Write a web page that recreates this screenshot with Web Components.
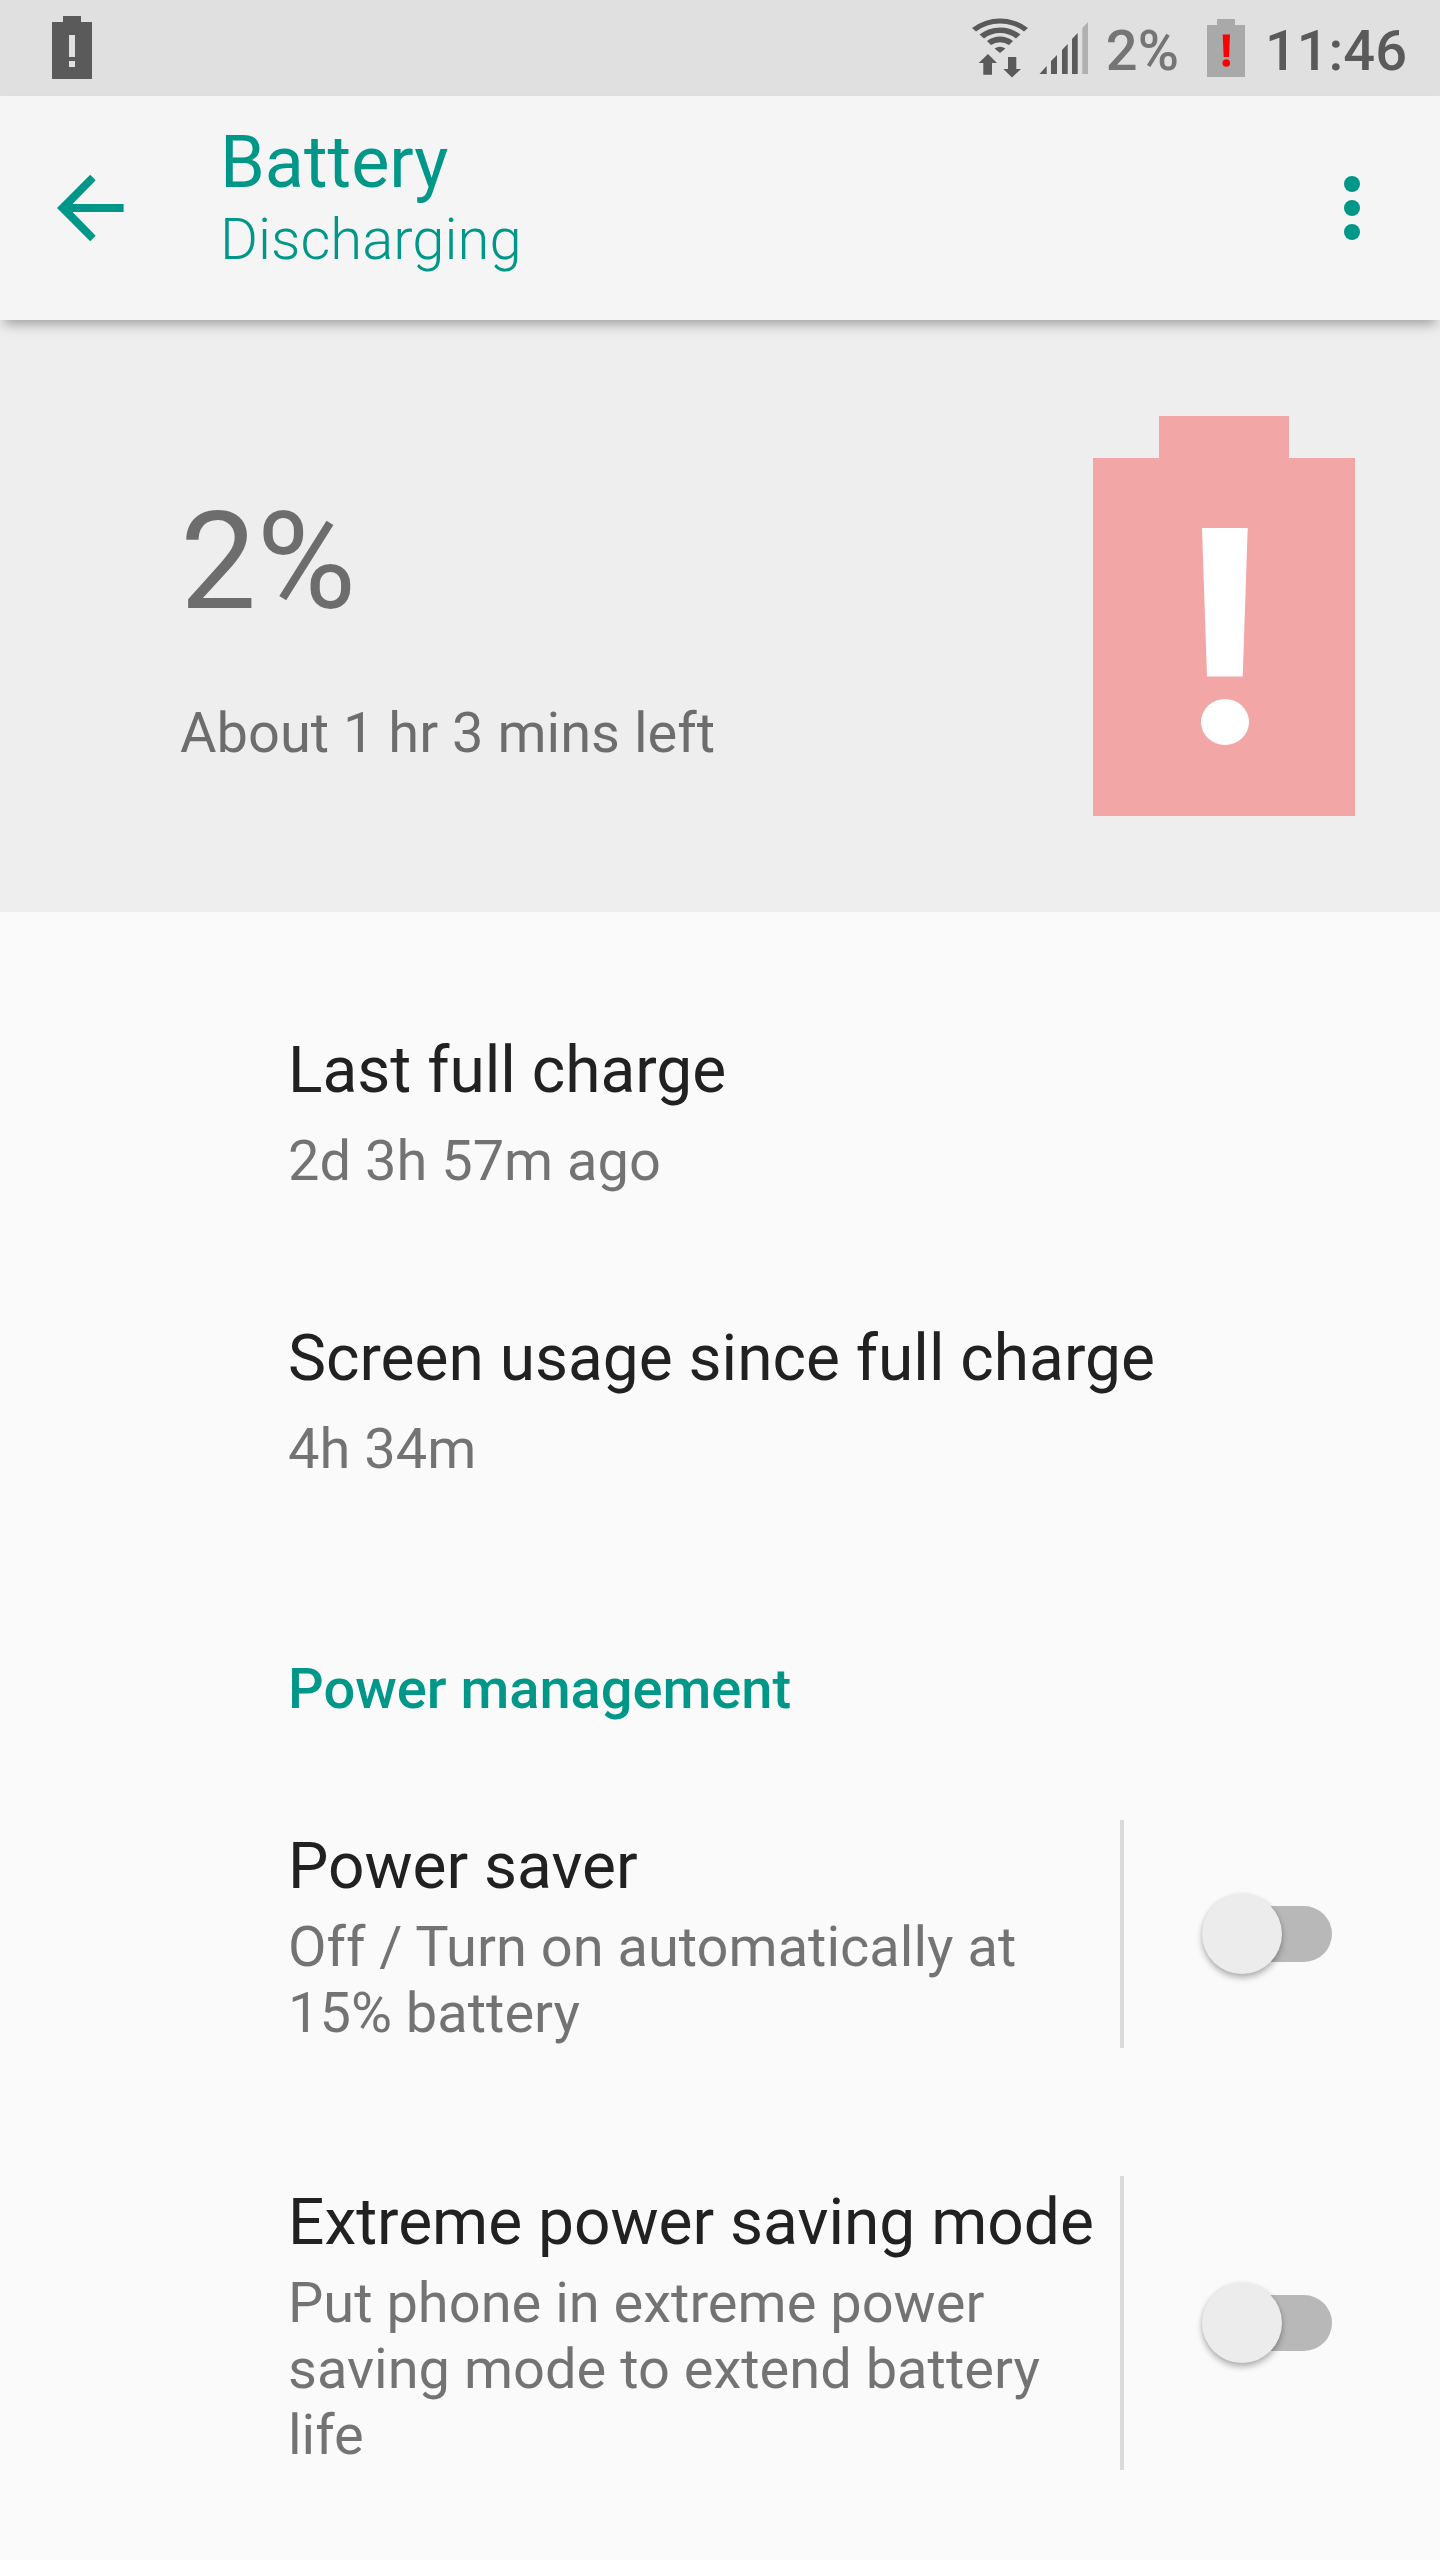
<!DOCTYPE html>
<html lang="en">
<head>
<meta charset="utf-8">
<meta name="viewport" content="width=device-width, initial-scale=1">
<title>Battery</title>
<style>
  html { background: #fafafa; }
  body {
    margin: 0;
    font-family: Roboto, "Liberation Sans", sans-serif;
    font-size: 56px;
    line-height: 66px;
    --accent: #009688;
    --primary: #212121;
    --secondary: rgba(0, 0, 0, .54);
    --status: #5a5a5a;
  }
</style>
</head>
<body>
<battery-screen></battery-screen>

<script>
const define = (name, html) => {
  const template = document.createElement('template');
  template.innerHTML = html;
  customElements.define(name, class extends HTMLElement {
    constructor() {
      super();
      this.attachShadow({ mode: 'open' }).append(template.content.cloneNode(true));
    }
  });
};

define('status-bar', `
  <style>
    :host { display: flex; align-items: center; justify-content: space-between; height: 96px;
            padding: 0 33px 0 52px; background: #e0e0e0; color: var(--status); font-weight: 500; }
    svg { display: block; height: 96px; }
    .tray { display: flex; align-items: center; }
    .level { margin: 6px 28px 0 16px; color: #757575; }
    .clock { margin: 6px 0 0 20px; }
  </style>
  <svg width="40" viewBox="52 0 40 96" role="img" aria-label="Battery low">
    <path fill="#5a5a5a" fill-rule="evenodd" d="M63 16h18v6h11v57H52V22h11zM69 35v22h6V35zM69 61v6h6v-6z"/>
  </svg>
  <div class="tray">
    <svg width="118" viewBox="972 0 118 96" fill="#5a5a5a" role="img" aria-label="Wi-Fi and mobile signal">
      <path d="M972 28A46 46 0 0 1 1028 28L1024 31.500A40 40 0 0 0 976 31.500Z"/>
      <path d="M979.500 34.500A33.500 33.500 0 0 1 1020.500 34.500L1016 38.500A26 26 0 0 0 984 38.500Z"/>
      <path d="M987 41A21 21 0 0 1 1013 41L1009 45A16 16 0 0 0 991 45Z"/>
      <path d="M994.500 48.500A10 10 0 0 1 1005.500 48.500L1000 53Z"/>
      <path d="M988 54L997 63H992V74.700H983.300V63H978.700Z"/>
      <path d="M1008 57H1016.300V69H1021L1012 77.500L1003.300 69H1008Z"/>
      <path d="M1039.500 74L1046.700 66V74ZM1051 74V61L1057 55V74ZM1062 74V50L1067.700 44V74ZM1072 74V39L1077.700 33V74Z"/>
      <path fill="#b0b0b0" d="M1082.300 74V28L1088 22V74Z"/>
    </svg>
    <span class="level">2%</span>
    <svg width="38" viewBox="1207 0 38 96" role="img" aria-label="Battery critical">
      <path fill="#a9a9a9" d="M1217 19h18v6h10v52h-38V25h10z"/>
      <path fill="#f00" d="M1222.700 34.500H1230L1229 57H1223.700Z"/>
      <circle fill="#f00" cx="1226.300" cy="63" r="3.800"/>
    </svg>
    <time class="clock">11:46</time>
  </div>
`);

define('app-bar', `
  <style>
    :host { display: flex; align-items: flex-start; justify-content: space-between; position: relative;
            background: #f5f5f5; color: var(--accent); box-shadow: 0 8px 12px -4px rgba(0, 0, 0, .34); }
    button { display: block; padding: 0; border: 0; background: none; color: inherit; align-self: center; }
    svg { display: block; fill: currentColor; }
    .back { margin-left: 42px; }
    .more { margin-right: 40px; }
    .heading { flex: 1; padding: 24px 0 48px 82px; }
    h1 { margin: 0; font-size: 72px; line-height: 86px; font-weight: 400; }
    p { margin: 0; font-size: 58px; font-weight: 300; }
  </style>
  <button class="back" aria-label="Navigate up">
    <svg width="96" height="96" viewBox="42 160 96 96">
      <path d="M57 208L90.200 174.700L95.700 180.300L72.500 204H123.600V212H72.500L95.700 235.700L90.200 241.300Z"/>
    </svg>
  </button>
  <div class="heading">
    <h1><slot name="title"></slot></h1>
    <p><slot name="subtitle"></slot></p>
  </div>
  <button class="more" aria-label="More options">
    <svg width="96" height="96" viewBox="0 0 96 96">
      <circle cx="48" cy="24" r="8"/><circle cx="48" cy="48" r="8"/><circle cx="48" cy="72" r="8"/>
    </svg>
  </button>
`);

define('battery-summary', `
  <style>
    :host { display: flex; align-items: center; justify-content: space-between;
            padding: 96px 85px 96px 180px; background: #eee; color: var(--secondary); }
    .text { display: flex; flex-direction: column; gap: 58px; padding-top: 16px; }
    .level { font-size: 136px; line-height: 160px; }
    svg { display: block; }
  </style>
  <div class="text">
    <div class="level"><slot name="level"></slot></div>
    <div><slot name="remaining"></slot></div>
  </div>
  <svg width="262" height="400" viewBox="0 0 262 400" role="img" aria-label="Battery critically low">
    <path fill="#f2a6a6" d="M66 0H196V42H262V400H0V42H66Z"/>
    <path fill="#fff" d="M109 112H154.700L149.700 260.500H114Z"/>
    <ellipse fill="#fff" cx="132" cy="306" rx="24" ry="23"/>
  </svg>
`);

define('info-row', `
  <style>
    :host { display: flex; flex-direction: column; gap: 18px; padding: 64px 64px 62px 288px; }
    .title { font-size: 64px; line-height: 78px; color: var(--primary); }
    .summary { color: var(--secondary); }
  </style>
  <div class="title"><slot name="title"></slot></div>
  <div class="summary"><slot></slot></div>
`);

define('section-title', `
  <style>
    :host { display: block; padding: 112px 64px 34px 288px; }
    h2 { margin: 0; font-size: inherit; font-weight: 500; color: var(--accent); }
  </style>
  <h2><slot></slot></h2>
`);

define('switch-row', `
  <style>
    :host { display: flex; padding: 64px 108px 64px 288px; }
    .text { flex: 1; display: flex; flex-direction: column; gap: 8px; padding: 8px 16px 2px 0; }
    .title { font-size: 64px; line-height: 78px; color: var(--primary); }
    .summary { color: var(--secondary); }
    .side { display: flex; align-items: center; padding-left: 78px; border-left: 4px solid #dadada; }
    input { appearance: none; display: grid; align-items: center; width: 130px; height: 80px; margin: 0; }
    input::before, input::after { content: ""; grid-area: 1 / 1; }
    input::before { height: 56px; margin-left: 8px; border-radius: 28px; background: #b8b8b8; }
    input::after { width: 80px; height: 80px; border-radius: 50%; background: #ececec;
                   box-shadow: 0 4px 6px rgba(0, 0, 0, .28), 0 0 4px rgba(0, 0, 0, .08); }
    input:checked::before { background: #80cbc4; }
    input:checked::after { justify-self: end; background: var(--accent); }
  </style>
  <div class="text">
    <label class="title" for="toggle"><slot name="title"></slot></label>
    <div class="summary"><slot></slot></div>
  </div>
  <div class="side"><input type="checkbox" role="switch" id="toggle"></div>
`);

define('battery-screen', `
  <style>
    :host { display: flex; flex-direction: column; min-height: 100vh; background: #fafafa; }
    main { display: flex; flex-direction: column; }
    .list { display: flex; flex-direction: column; padding-top: 56px; }
  </style>
  <status-bar></status-bar>
  <app-bar>
    <span slot="title">Battery</span>
    <span slot="subtitle">Discharging</span>
  </app-bar>
  <main>
    <battery-summary>
      <span slot="level">2%</span>
      <span slot="remaining">About 1 hr 3 mins left</span>
    </battery-summary>
    <div class="list">
      <info-row><span slot="title">Last full charge</span>2d 3h 57m ago</info-row>
      <info-row><span slot="title">Screen usage since full charge</span>4h 34m</info-row>
      <section-title>Power management</section-title>
      <switch-row><span slot="title">Power saver</span>Off / Turn on automatically at 15% battery</switch-row>
      <switch-row><span slot="title">Extreme power saving mode</span>Put phone in extreme power saving mode to extend battery life</switch-row>
    </div>
  </main>
`);
</script>
</body>
</html>
